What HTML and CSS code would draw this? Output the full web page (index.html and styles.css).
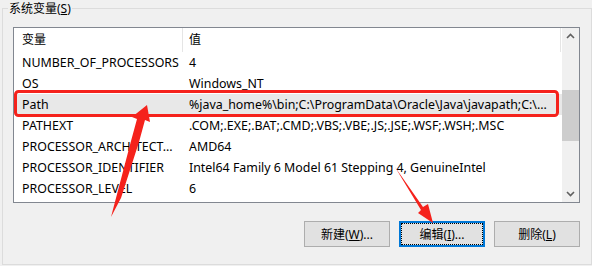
FILE: index.html
```html
<!DOCTYPE html>
<html>
<head>
	<meta charset="utf-8" />
	<title>系统变量</title>
	<link rel="stylesheet" href="styles.css">
</head>
<body>

<fieldset class="group">
	<legend>系统变量(<u>S</u>)</legend>

	<div class="list">
		<div class="rows">
			<div class="head">
				<span class="col1">变量</span>
				<span class="col2">值</span>
			</div>
			<div class="row"><span class="col1">NUMBER_OF_PROCESSORS</span><span class="col2">4</span></div>
			<div class="row"><span class="col1">OS</span><span class="col2">Windows_NT</span></div>
			<div class="row selected"><span class="col1">Path</span><span class="col2">%java_home%\bin;C:\ProgramData\Oracle\Java\javapath;C:\...</span></div>
			<div class="row"><span class="col1">PATHEXT</span><span class="col2">.COM;.EXE;.BAT;.CMD;.VBS;.VBE;.JS;.JSE;.WSF;.WSH;.MSC</span></div>
			<div class="row"><span class="col1">PROCESSOR_ARCHITECT...</span><span class="col2">AMD64</span></div>
			<div class="row"><span class="col1">PROCESSOR_IDENTIFIER</span><span class="col2">Intel64 Family 6 Model 61 Stepping 4, GenuineIntel</span></div>
			<div class="row"><span class="col1">PROCESSOR_LEVEL</span><span class="col2">6</span></div>
		</div>
		<div class="vscroll">
			<svg class="arrow" width="17" height="17" viewBox="0 0 17 17"><path d="M5 10 L8.5 6.5 L12 10" fill="none" stroke="#606060" stroke-width="1.6"/></svg>
			<div class="track"><div class="thumb"></div></div>
			<svg class="arrow" width="17" height="17" viewBox="0 0 17 17"><path d="M5 7 L8.5 10.5 L12 7" fill="none" stroke="#606060" stroke-width="1.6"/></svg>
		</div>
	</div>

	<div class="buttons">
		<button>新建(<u>W</u>)...</button>
		<button class="focused"><span>编辑(<u>I</u>)...</span></button>
		<button>删除(<u>L</u>)</button>
	</div>
</fieldset>

<!-- red annotation drawn over the dialog -->
<svg class="marks" width="592" height="266" viewBox="0 0 592 266">
	<rect x="15.5" y="91.5" width="542" height="24" rx="3" fill="none" stroke="#f5221c" stroke-width="3"/>
	<polygon fill="#f5221c" points="111,217 131,141 137,119 132,117 147,105 150,122 145,120 139,142 121,198"/>
	<polygon fill="#f5221c" points="395,167 423,207 428,204 433,223 418,213 421,210"/>
</svg>

</body>
</html>
```

FILE: styles.css
```css
body {
	margin: 0;
	width: 592px;
	height: 266px;
	background: #f0f0f0;
	font-family: "Noto Sans", "Noto Sans CJK SC", sans-serif;
	font-size: 12px;
	color: #000;
	position: relative;
	overflow: hidden;
}

.group {
	box-sizing: border-box;
	margin: 0 0 0 2px;
	padding: 0;
	width: 590px;
	height: 265px;
	border: 1px solid #dcdcdc;
	min-width: 0;
}
.group legend {
	margin-left: 5px;
	padding: 0 1px;
	line-height: 17px;
}

/* list view */
.list {
	box-sizing: border-box;
	margin: 10px 0 0 10px;
	width: 567px;
	height: 176px;
	border: 1px solid #828790;
	background: #fff;
	display: flex;
	overflow: hidden;
	font-size: 12.4px;
}
.list .rows {
	flex: 1;
	min-width: 0;
}
.list .head,
.list .row {
	display: grid;
	grid-template-columns: 169px 1fr;
	white-space: nowrap;
}
.list .head {
	height: 24px;
	line-height: 24px;
	font-size: 12px;
}
.list .head .col1 {
	border-right: 1px solid #e5e5e5;
}
.list .head .col2 {
	border-right: 1px solid #e5e5e5;
	margin-right: 1px;
}
.list .row {
	height: 21px;
	line-height: 21px;
}
.list .col1 {
	padding-left: 8px;
	overflow: hidden;
}
.list .col2 {
	padding-left: 6px;
	overflow: hidden;
}
.list .row.selected {
	background: #e8e8e8;
}

/* vertical scroll bar */
.vscroll {
	width: 17px;
	background: #f0f0f0;
	display: flex;
	flex-direction: column;
}
.vscroll .arrow {
	display: block;
	flex: none;
}
.vscroll .track {
	flex: 1;
	padding-top: 45px;
}
.vscroll .thumb {
	height: 51px;
	background: #cdcdcd;
}

/* buttons row */
.buttons {
	display: flex;
	justify-content: flex-end;
	gap: 9px;
	margin: 18px 11px 0 0;
}
.buttons button {
	box-sizing: border-box;
	width: 86px;
	height: 26px;
	padding: 0;
	border: 1px solid #adadad;
	background: #e1e1e1;
	font-family: inherit;
	font-size: 12px;
	color: #000;
}
.buttons button.focused {
	border: 2px solid #0078d7;
	padding: 1px;
}
.buttons button.focused span {
	display: flex;
	align-items: center;
	justify-content: center;
	height: 100%;
	outline: 1px dotted #000;
}

.marks {
	position: absolute;
	left: 0;
	top: 0;
	pointer-events: none;
}
```
